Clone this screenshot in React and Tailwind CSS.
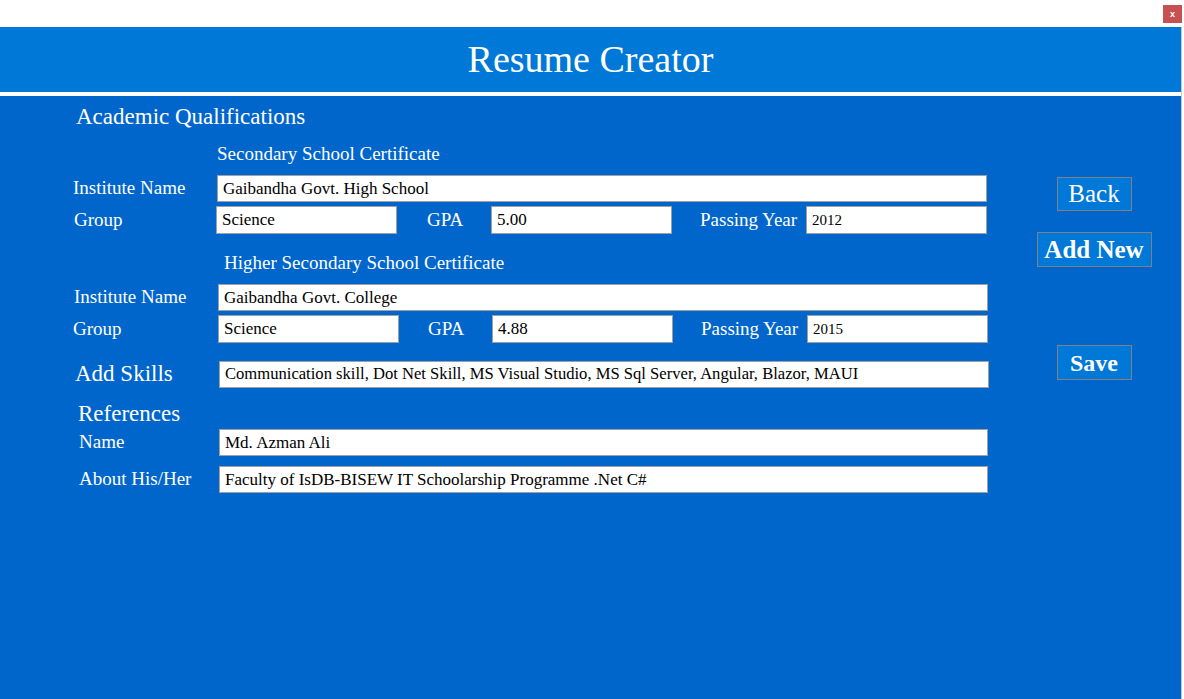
export default function App() {
  const font = { fontFamily: '"Liberation Serif", "DejaVu Serif", serif' };
  const Input = ({ w, value, cls = "text-[17px]" }) => (
    <div
      className={`h-full shrink-0 bg-white border border-[#a0a0a0] flex items-center pl-[5px] text-black whitespace-nowrap overflow-hidden ${cls}`}
      style={{ width: w }}
    >
      {value}
    </div>
  );
  return (
    <div className="w-[1184px] h-[699px] bg-white flex flex-col overflow-hidden" style={font}>
      <div className="h-[27px] flex justify-end items-start pr-[2px] pt-[5px]">
        <div className="w-[19px] h-[18px] bg-[#c75050] text-white text-[9px] flex items-center justify-center font-bold leading-none" style={{ fontFamily: '"Liberation Sans", sans-serif' }}>x</div>
      </div>
      <div className="flex-1 flex flex-col mr-[2px] border-r border-[#c8c8c8]">
        <div className="h-[65px] bg-[#0078d7] flex items-center justify-center text-white text-[38px] leading-none pb-[2px]">
          Resume Creator
        </div>
        <div className="h-[4px] bg-white" />
        <div className="flex-1 bg-[#0066cc] flex text-white">
          <div className="w-[1004px] shrink-0 flex flex-col">
            <div className="mt-[7px] h-[28px] pl-[76px] text-[23px] leading-[28px]">Academic Qualifications</div>
            <div className="mt-[12px] h-[22px] pl-[217px] text-[19px] leading-[22px]">Secondary School Certificate</div>
            <div className="mt-[10px] h-[27px] flex items-center">
              <div className="w-[217px] shrink-0 pl-[73px] text-[19px]">Institute Name</div>
              <Input w={770} value="Gaibandha Govt. High School" />
            </div>
            <div className="mt-[4px] h-[28px] flex items-center">
              <div className="w-[216px] shrink-0 pl-[74px] text-[19px]">Group</div>
              <Input w={181} value="Science" />
              <div className="w-[94px] shrink-0 pl-[30px] text-[19px]">GPA</div>
              <Input w={181} value="5.00" />
              <div className="w-[134px] shrink-0 pl-[28px] text-[19px] whitespace-nowrap">Passing Year</div>
              <Input w={181} value="2012" cls="text-[15px]" />
            </div>
            <div className="mt-[18px] h-[22px] pl-[224px] text-[19px] leading-[22px]">Higher Secondary School Certificate</div>
            <div className="mt-[10px] h-[27px] flex items-center">
              <div className="w-[218px] shrink-0 pl-[74px] text-[19px]">Institute Name</div>
              <Input w={770} value="Gaibandha Govt. College" />
            </div>
            <div className="mt-[4px] h-[28px] flex items-center">
              <div className="w-[218px] shrink-0 pl-[73px] text-[19px]">Group</div>
              <Input w={181} value="Science" />
              <div className="w-[93px] shrink-0 pl-[29px] text-[19px]">GPA</div>
              <Input w={181} value="4.88" />
              <div className="w-[134px] shrink-0 pl-[28px] text-[19px] whitespace-nowrap">Passing Year</div>
              <Input w={181} value="2015" cls="text-[15px]" />
            </div>
            <div className="mt-[18px] h-[27px] flex items-center">
              <div className="w-[219px] shrink-0 pl-[75px] text-[23px]">Add Skills</div>
              <Input w={770} value="Communication skill, Dot Net Skill, MS Visual Studio, MS Sql Server, Angular, Blazor, MAUI" cls="text-[16.6px]" />
            </div>
            <div className="mt-[14px] h-[24px] pl-[78px] text-[23px] leading-[24px]">References</div>
            <div className="mt-[3px] h-[27px] flex items-center">
              <div className="w-[219px] shrink-0 pl-[79px] text-[19px]">Name</div>
              <Input w={769} value="Md. Azman Ali" />
            </div>
            <div className="mt-[10px] h-[27px] flex items-center">
              <div className="w-[219px] shrink-0 pl-[79px] text-[19px] whitespace-nowrap">About His/Her</div>
              <Input w={769} value="Faculty of IsDB-BISEW IT Schoolarship Programme .Net C#" />
            </div>
          </div>
          <div className="w-[170px] shrink-0 ml-[5px] flex flex-col items-center">
            <div className="mt-[81px] w-[75px] h-[34px] bg-[#0078d7] border border-[#808080] flex items-center justify-center text-[25px]">Back</div>
            <div className="mt-[21px] w-[115px] h-[35px] bg-[#0078d7] border border-[#808080] flex items-center justify-center text-[25px] font-bold whitespace-nowrap">Add New</div>
            <div className="mt-[78px] w-[75px] h-[35px] bg-[#0078d7] border border-[#808080] flex items-center justify-center text-[24px] font-bold">Save</div>
          </div>
        </div>
      </div>
    </div>
  );
}
